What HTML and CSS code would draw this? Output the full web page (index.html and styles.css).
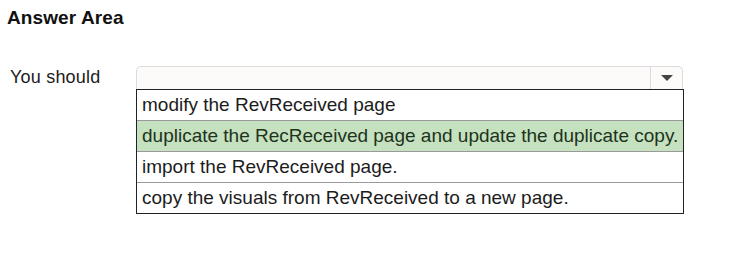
FILE: index.html
```html
<!DOCTYPE html>
<html>
<head>
<meta charset="utf-8">
<link rel="stylesheet" href="styles.css">
</head>
<body>
<div class="page">
  <h1 class="title">Answer Area</h1>
  <div class="question">
    <div class="label">You should</div>
    <div class="control">
      <div class="select">
        <div class="select-value"></div>
        <div class="select-btn">
          <svg width="12" height="6" viewBox="0 0 12 6"><polygon points="0,0 12,0 6,6" fill="#444"/></svg>
        </div>
      </div>
      <ul class="options">
        <li class="option">modify the RevReceived page</li>
        <li class="option selected">duplicate the RecReceived page and update the duplicate copy.</li>
        <li class="option">import the RevReceived page.</li>
        <li class="option">copy the visuals from RevReceived to a new page.</li>
      </ul>
    </div>
  </div>
</div>
</body>
</html>
```
FILE: styles.css
```css
html, body {
  margin: 0;
  padding: 0;
  background: #ffffff;
}
.page {
  font-family: "Liberation Sans", Arial, sans-serif;
  color: #1c1c1c;
  padding: 6px 0 0 7px;
}
.title {
  margin: 0;
  font-size: 19px;
  font-weight: bold;
  line-height: 23px;
  letter-spacing: 0.1px;
  color: #111;
}
.question {
  display: flex;
  margin-top: 37px;
}
.label {
  width: 129px;
  padding-left: 3px;
  box-sizing: border-box;
  font-size: 18px;
  letter-spacing: 0.2px;
  line-height: 22px;
}
.control {
  width: 548px;
  display: flex;
  flex-direction: column;
}
.select {
  height: 22px;
  display: flex;
  border: 1px solid #dcdcdc;
  border-bottom: none;
  border-radius: 5px 5px 0 0;
  background: #fdfafa;
  margin-right: 1px;
}
.select-value {
  flex: 1;
}
.select-btn {
  width: 31px;
  border-left: 1px solid #dcdcdc;
  display: flex;
  align-items: center;
  justify-content: center;
}
.options {
  list-style: none;
  margin: 0;
  padding: 0;
  border: 1px solid #222;
}
.option {
  height: 30px;
  line-height: 30px;
  padding-left: 5px;
  font-size: 19px;
  color: #1c1c1c;
  border-top: 1px solid #9a9a9a;
}
.option:first-child {
  border-top: none;
}
.option.selected {
  background: #c6e1c0;
  color: #1d331c;
}
```
